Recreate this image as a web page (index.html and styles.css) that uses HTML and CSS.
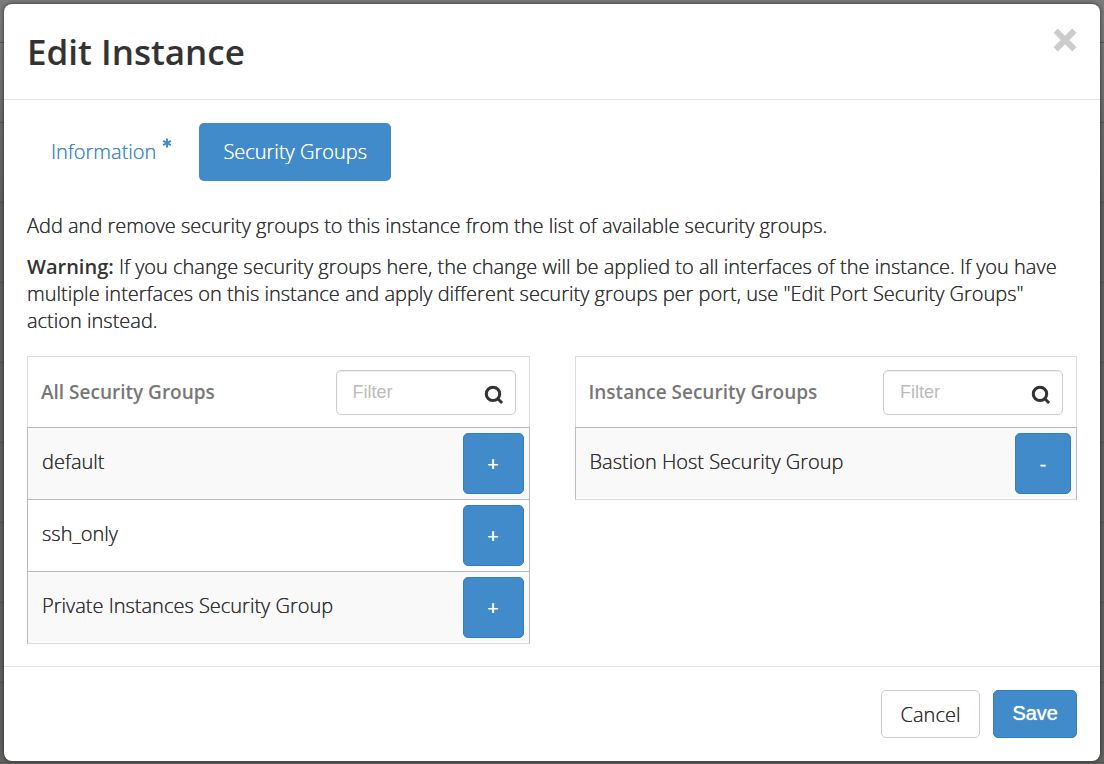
FILE: index.html
```html
<!DOCTYPE html>
<html lang="en">
<head>
<meta charset="utf-8">
<meta name="viewport" content="width=device-width, initial-scale=1">
<title>Edit Instance</title>
<link rel="stylesheet" href="styles.css">
</head>
<body>
<div class="backdrop">
  <div class="modal" role="dialog" aria-labelledby="modal-title">
    <header class="modal-header">
      <h1 class="modal-title" id="modal-title">Edit Instance</h1>
      <button class="close" type="button" aria-label="Close">
        <svg class="close-icon" viewBox="0 0 20 20" aria-hidden="true"><path d="M4 4 16 16M16 4 4 16"/></svg>
      </button>
    </header>
    <main class="modal-body">
      <nav class="tabs">
        <a class="tab" href="#information">Information<svg class="required" viewBox="0 0 10 10" aria-hidden="true"><path d="M5 .5v9M1.1 2.8l7.8 4.4M8.9 2.8 1.1 7.2"/></svg></a>
        <a class="tab active" href="#groups" aria-current="page">Security Groups</a>
      </nav>
      <p class="text">Add and remove security groups to this instance from the list of available security groups.</p>
      <p class="text"><strong class="warning">Warning:</strong> If you change security groups here, the change will be applied to all interfaces of the instance. If you have multiple interfaces on this instance and apply different security groups per port, use "Edit Port Security Groups" action instead.</p>
      <div class="columns" id="groups">
        <section class="panel">
          <div class="panel-header">
            <h2 class="panel-title">All Security Groups</h2>
            <div class="filter">
              <input class="filter-input" type="text" placeholder="Filter" aria-label="Filter all security groups">
              <svg class="search-icon" viewBox="0 0 20 20" aria-hidden="true"><circle cx="9" cy="8.9" r="6.7"/><path d="m13.8 13.7 4.3 4.3"/></svg>
            </div>
          </div>
          <ul class="groups">
            <li class="group"><span class="group-name">default</span><button class="btn primary add" type="button" aria-label="Add default">+</button></li>
            <li class="group"><span class="group-name">ssh_only</span><button class="btn primary add" type="button" aria-label="Add ssh_only">+</button></li>
            <li class="group"><span class="group-name">Private Instances Security Group</span><button class="btn primary add" type="button" aria-label="Add Private Instances Security Group">+</button></li>
          </ul>
        </section>
        <section class="panel">
          <div class="panel-header">
            <h2 class="panel-title">Instance Security Groups</h2>
            <div class="filter">
              <input class="filter-input" type="text" placeholder="Filter" aria-label="Filter instance security groups">
              <svg class="search-icon" viewBox="0 0 20 20" aria-hidden="true"><circle cx="9" cy="8.9" r="6.7"/><path d="m13.8 13.7 4.3 4.3"/></svg>
            </div>
          </div>
          <ul class="groups">
            <li class="group"><span class="group-name">Bastion Host Security Group</span><button class="btn primary remove" type="button" aria-label="Remove Bastion Host Security Group">-</button></li>
          </ul>
        </section>
      </div>
    </main>
    <footer class="modal-footer">
      <button class="btn cancel" type="button">Cancel</button>
      <button class="btn primary save" type="submit">Save</button>
    </footer>
  </div>
</div>
</body>
</html>
```
FILE: styles.css
```css
* { box-sizing: border-box; }

body {
  margin: 0;
  font-family: "Open Sans", sans-serif;
  font-size: 20px;
  font-weight: 300;
  line-height: 27px;
  color: #333;
  text-shadow: 0 0 currentColor;
}

.backdrop {
  min-height: 100vh;
  padding: 4px 4px 3px;
  background:
    repeating-linear-gradient(transparent 0 42px, #555 42px 43px, transparent 43px 80px),
    linear-gradient(#7b7b7b 0, #636261 200px);
}

.modal {
  background: #fff;
  border-radius: 8px;
  box-shadow: 0 0 4px rgba(0, 0, 0, 0.6);
}

.modal-header {
  display: flex;
  justify-content: space-between;
  align-items: flex-start;
  padding: 23px;
  border-bottom: 1px solid #e5e5e5;
}

.modal-title {
  margin: 0;
  font-size: 35px;
  font-weight: 600;
  line-height: 49px;
  text-shadow: none;
}

.close {
  display: flex;
  margin: 1px 0 0;
  padding: 0;
  border: 0;
  background: none;
}

.close-icon {
  width: 24px;
  height: 24px;
  fill: none;
  stroke: #ccc;
  stroke-width: 5;
  stroke-linecap: square;
}

.modal-body { padding: 23px 23px 22px; }

.tabs {
  display: flex;
  gap: 3px;
  margin-bottom: 31px;
}

.tab {
  display: flex;
  padding: 15px 24px 16px;
  border-radius: 5px;
  color: #428bca;
  text-decoration: none;
}

.tab.active {
  background: #428bca;
  color: #fff;
}

.required {
  width: 10px;
  height: 10px;
  margin-left: 6px;
  fill: none;
  stroke: currentColor;
  stroke-width: 2;
}

.text { margin: 0 0 14px; }

.warning {
  font-weight: 600;
  text-shadow: none;
}

.columns {
  display: grid;
  grid-template-columns: 1fr 1fr;
  align-items: start;
  gap: 45px;
  margin-top: 22px;
}

.panel { min-width: 0; }

.panel-header {
  display: flex;
  justify-content: space-between;
  align-items: center;
  padding: 13px 13px 12px;
  border: 1px solid #ddd;
  border-bottom: 0;
}

.panel-title {
  margin: 0;
  font-size: 19px;
  font-weight: 600;
  color: #777;
  text-shadow: none;
}

.filter {
  display: flex;
  align-items: center;
  width: 180px;
  height: 45px;
  padding: 0 11px 0 16px;
  border: 1px solid #ccc;
  border-radius: 5px;
  box-shadow: inset 0 1px 1px rgba(0, 0, 0, 0.08);
}

.filter-input {
  flex: 1;
  min-width: 0;
  padding: 0;
  border: 0;
  outline: 0;
  background: none;
  color: #555;
  font: 18px "Liberation Sans", Arial, sans-serif;
}

.filter-input::placeholder { color: #bbb; }

.search-icon {
  width: 20px;
  height: 20px;
  margin-top: 4px;
  fill: none;
  stroke: #333;
  stroke-width: 3;
}

.groups {
  margin: 0;
  padding: 0;
  list-style: none;
  border: 1px solid #bbb;
  border-top: 0;
  border-bottom-color: #ddd;
}

.group {
  display: flex;
  justify-content: space-between;
  align-items: center;
  padding: 5px 5px 5px 14px;
  border-top: 1px solid #bbb;
}

.group:nth-child(odd) { background: #f9f9f9; }

.group-name { padding-bottom: 4px; }

.btn {
  border: 1px solid #ccc;
  border-radius: 5px;
  background: #fff;
  color: #333;
  font: inherit;
  text-shadow: 0 0 currentColor;
}

.btn.primary {
  border-color: #357ebd;
  background: #428bca;
  color: #fff;
}

.add,
.remove {
  height: 61px;
  padding: 0 19px;
}

.btn.add,
.btn.remove { font-weight: 400; }

.add { width: 61px; }
.remove { width: 56px; }

.modal-footer {
  display: flex;
  justify-content: flex-end;
  gap: 13px;
  padding: 23px;
  border-top: 1px solid #e5e5e5;
}

.cancel,
.save {
  height: 48px;
  padding: 0 19px;
}

.btn.save {
  padding: 0 18px 2px;
  font-family: "Liberation Sans", Arial, sans-serif;
  text-shadow: 0 0 1px #fff;
}
```
